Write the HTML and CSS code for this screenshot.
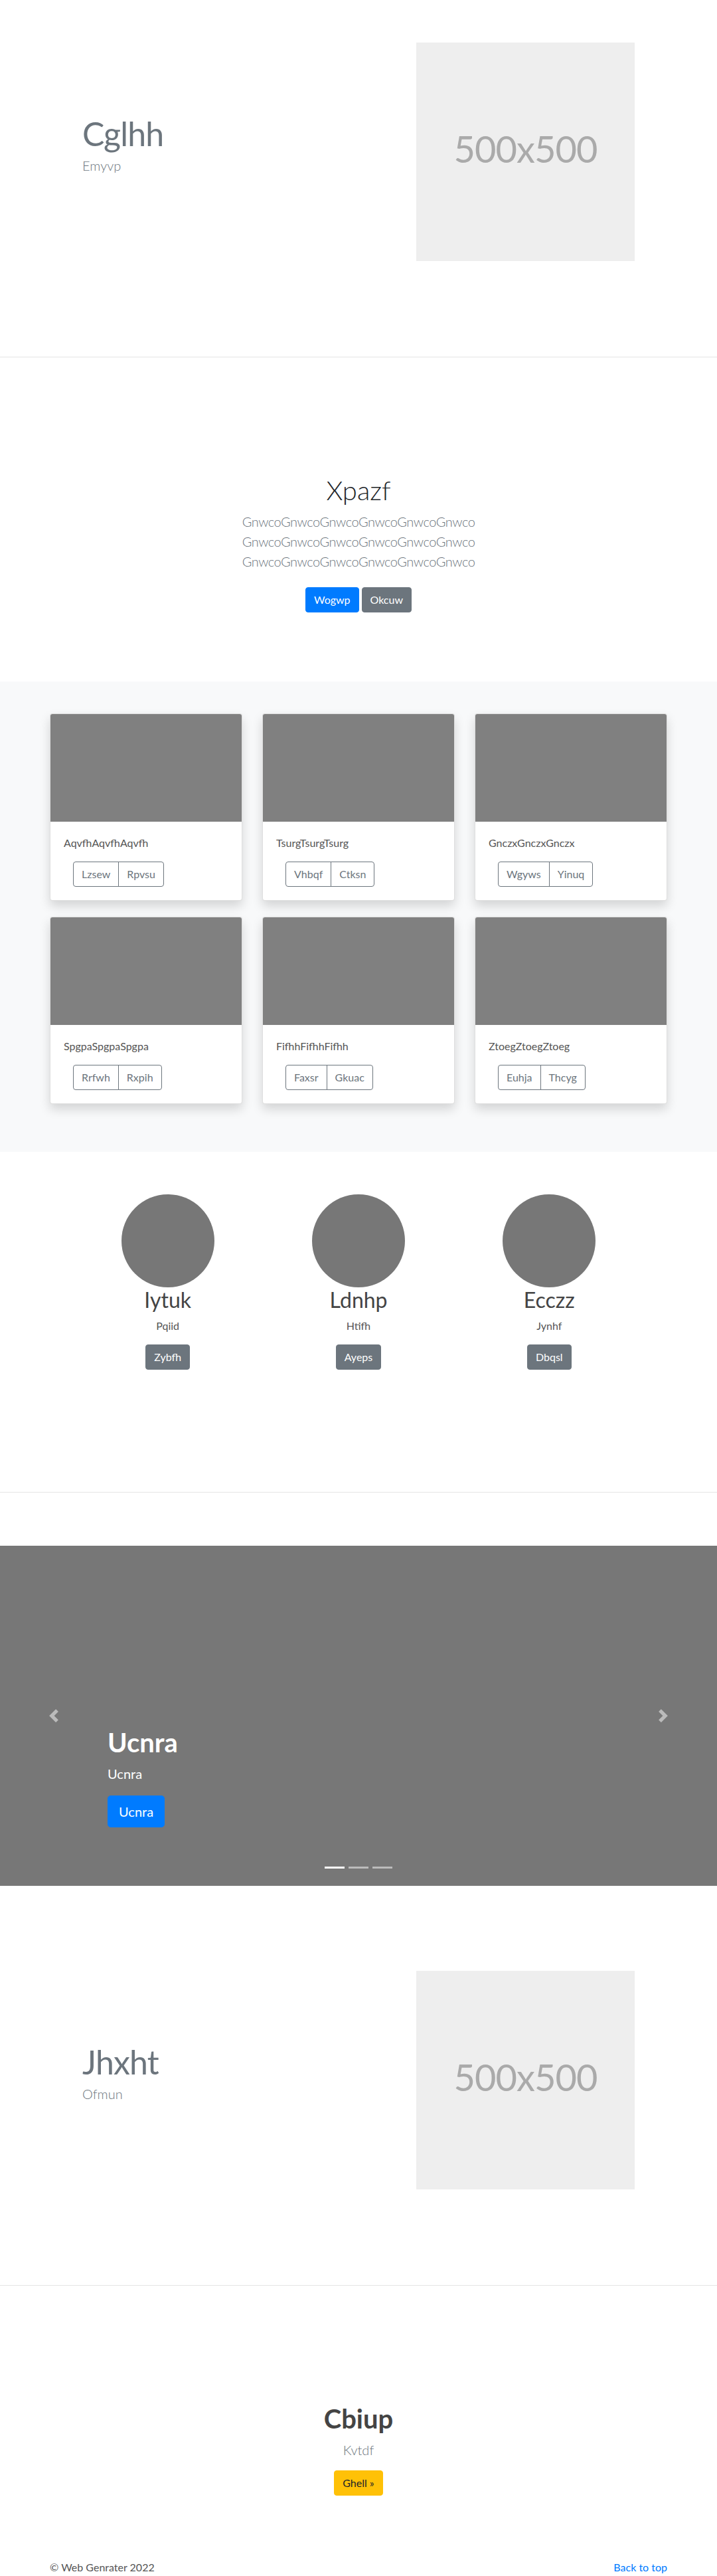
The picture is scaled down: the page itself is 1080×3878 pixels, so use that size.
FILE: index.html
```html
<!DOCTYPE html>
<html lang="en">
<head>
<meta charset="utf-8">
<title>Web Genrater</title>
<link rel="stylesheet" href="styles.css">
</head>
<body>
<main>
  <div class="narrow featurette">
    <div class="feat-text">
      <h2 class="featurette-heading">Cglhh</h2>
      <p class="lead muted feat-lead">Emyvp</p>
    </div>
    <div class="feat-img">
      <svg class="ph-svg" xmlns="http://www.w3.org/2000/svg" width="329" height="329" role="img" aria-label="500x500"><rect width="100%" height="100%" fill="#eee"/><text x="50%" y="50%" fill="#aaa" dy=".3em" text-anchor="middle">500x500</text></svg>
    </div>
  </div>

  <hr class="divider">

  <section class="jumbo">
    <h1 class="jumbo-heading">Xpazf</h1>
    <p class="lead muted jumbo-lead">GnwcoGnwcoGnwcoGnwcoGnwcoGnwco GnwcoGnwcoGnwcoGnwcoGnwcoGnwco GnwcoGnwcoGnwcoGnwcoGnwcoGnwco</p>
    <p class="jumbo-actions"><a href="#" class="btn btn-primary">Wogwp</a><a href="#" class="btn btn-secondary">Okcuw</a></p>
  </section>

  <section class="album">
    <div class="card-grid">
      <div class="card">
        <div class="card-img"></div>
        <div class="card-body">
          <p class="card-text">AqvfhAqvfhAqvfh</p>
          <div class="btn-group"><a href="#" class="btn btn-outline">Lzsew</a><a href="#" class="btn btn-outline">Rpvsu</a></div>
        </div>
      </div>
      <div class="card">
        <div class="card-img"></div>
        <div class="card-body">
          <p class="card-text">TsurgTsurgTsurg</p>
          <div class="btn-group"><a href="#" class="btn btn-outline">Vhbqf</a><a href="#" class="btn btn-outline">Ctksn</a></div>
        </div>
      </div>
      <div class="card">
        <div class="card-img"></div>
        <div class="card-body">
          <p class="card-text">GnczxGnczxGnczx</p>
          <div class="btn-group"><a href="#" class="btn btn-outline">Wgyws</a><a href="#" class="btn btn-outline">Yinuq</a></div>
        </div>
      </div>
      <div class="card">
        <div class="card-img"></div>
        <div class="card-body">
          <p class="card-text">SpgpaSpgpaSpgpa</p>
          <div class="btn-group"><a href="#" class="btn btn-outline">Rrfwh</a><a href="#" class="btn btn-outline">Rxpih</a></div>
        </div>
      </div>
      <div class="card">
        <div class="card-img"></div>
        <div class="card-body">
          <p class="card-text">FifhhFifhhFifhh</p>
          <div class="btn-group"><a href="#" class="btn btn-outline">Faxsr</a><a href="#" class="btn btn-outline">Gkuac</a></div>
        </div>
      </div>
      <div class="card">
        <div class="card-img"></div>
        <div class="card-body">
          <p class="card-text">ZtoegZtoegZtoeg</p>
          <div class="btn-group"><a href="#" class="btn btn-outline">Euhja</a><a href="#" class="btn btn-outline">Thcyg</a></div>
        </div>
      </div>
    </div>
  </section>

  <section class="narrow team">
    <div class="member">
      <div class="avatar"></div>
      <h2 class="member-name">Iytuk</h2>
      <p class="member-role">Pqiid</p>
      <p class="member-action"><a href="#" class="btn btn-secondary">Zybfh</a></p>
    </div>
    <div class="member">
      <div class="avatar"></div>
      <h2 class="member-name">Ldnhp</h2>
      <p class="member-role">Htifh</p>
      <p class="member-action"><a href="#" class="btn btn-secondary">Ayeps</a></p>
    </div>
    <div class="member">
      <div class="avatar"></div>
      <h2 class="member-name">Ecczz</h2>
      <p class="member-role">Jynhf</p>
      <p class="member-action"><a href="#" class="btn btn-secondary">Dbqsl</a></p>
    </div>
  </section>

  <hr class="divider">

  <div class="carousel">
    <div class="carousel-caption">
      <h1 class="caption-title">Ucnra</h1>
      <p class="caption-text">Ucnra</p>
      <p><a href="#" class="btn btn-lg btn-primary">Ucnra</a></p>
    </div>
    <a href="#" class="carousel-control prev" aria-label="Previous">
      <svg width="20" height="20" viewBox="0 0 8 8" fill="#fff"><path d="M5.25 0l-4 4 4 4 1.5-1.5L4.25 4l2.5-2.5L5.25 0z"/></svg>
    </a>
    <a href="#" class="carousel-control next" aria-label="Next">
      <svg width="20" height="20" viewBox="0 0 8 8" fill="#fff"><path d="M2.75 0l-1.5 1.5L3.75 4l-2.5 2.5L2.75 8l4-4-4-4z"/></svg>
    </a>
    <ol class="indicators">
      <li class="active"></li>
      <li></li>
      <li></li>
    </ol>
  </div>

  <div class="narrow featurette">
    <div class="feat-text">
      <h2 class="featurette-heading">Jhxht</h2>
      <p class="lead muted feat-lead">Ofmun</p>
    </div>
    <div class="feat-img">
      <svg class="ph-svg" xmlns="http://www.w3.org/2000/svg" width="329" height="329" role="img" aria-label="500x500"><rect width="100%" height="100%" fill="#eee"/><text x="50%" y="50%" fill="#aaa" dy=".3em" text-anchor="middle">500x500</text></svg>
    </div>
  </div>

  <hr class="divider">

  <section class="cta">
    <h1 class="cta-title">Cbiup</h1>
    <p class="lead muted cta-lead">Kvtdf</p>
    <p><a href="#" class="btn btn-warning">Ghell &raquo;</a></p>
  </section>
</main>

<footer class="footer">
  <p>&copy; Web Genrater 2022</p>
  <p><a href="#" class="top-link">Back to top</a></p>
</footer>
</body>
</html>
```

FILE: styles.css
```css
* { box-sizing: border-box; }

html, body {
  margin: 0;
  padding: 0;
}

body {
  font-family: Lato, "Open Sans", "Liberation Sans", sans-serif;
  font-size: 16px;
  line-height: 1.5;
  color: #212529;
  background: #fff;
}

h1, h2, p, ol { margin: 0; padding: 0; }

a { color: #007bff; text-decoration: none; }

.narrow {
  width: 862px;
  margin: 0 auto;
}

.muted { color: #6c757d; }

.lead {
  font-size: 20px;
  font-weight: 300;
  line-height: 30px;
}

/* Featurette */
.featurette {
  display: flex;
  padding: 64px 0;
}

.feat-text {
  flex: 0 0 58.3333%;
  padding: 0 15px;
}

.feat-img {
  flex: 0 0 41.6667%;
  padding: 0 15px;
}

.featurette-heading {
  margin-top: 112px;
  margin-bottom: 8px;
  font-size: 50px;
  font-weight: 400;
  line-height: 1;
  letter-spacing: -0.8px;
  color: #6c757d;
}

.feat-lead { margin-bottom: 16px; }

.ph-svg {
  display: block;
  width: 329px;
  height: 329px;
  font-family: Lato, "Open Sans", sans-serif;
  font-size: 56px;
  letter-spacing: -1px;
}

.divider {
  margin: 80px 0;
  height: 0;
  border: 0;
  border-top: 1px solid rgba(0, 0, 0, 0.1);
}

/* Buttons */
.btn {
  display: inline-block;
  font-size: 16px;
  font-weight: 400;
  line-height: 24px;
  padding: 6px 12px;
  border: 1px solid transparent;
  border-radius: 4px;
  text-align: center;
  white-space: nowrap;
}

.btn-primary { background: #007bff; border-color: #007bff; color: #fff; }
.btn-secondary { background: #6c757d; border-color: #6c757d; color: #fff; }
.btn-warning { background: #ffc107; border-color: #ffc107; color: #212529; }

.btn-lg {
  font-size: 20px;
  line-height: 30px;
  padding: 8px 16px;
  border-radius: 4.8px;
}

.btn-outline {
  background: transparent;
  border-color: #6c757d;
  color: #6c757d;
}

/* Jumbotron */
.jumbo {
  padding: 96px 0;
  text-align: center;
}

.jumbo-heading {
  font-size: 40px;
  font-weight: 300;
  line-height: 1.2;
  margin-bottom: 8px;
}

.jumbo-lead {
  max-width: 450px;
  margin: 0 auto 16px;
  letter-spacing: -0.5px;
}

.jumbo-actions {
  display: flex;
  justify-content: center;
  gap: 4px;
  padding: 8px 0;
}

/* Album */
.album {
  background: #f8f9fa;
  padding: 48px 0;
}

.card-grid {
  width: 930px;
  margin: 0 auto;
  padding-bottom: 24px;
  display: grid;
  grid-template-columns: repeat(3, 1fr);
  gap: 24px 30px;
}

.card {
  background: #fff;
  border: 1px solid rgba(0, 0, 0, 0.125);
  border-radius: 4px;
  box-shadow: 0 8px 16px rgba(0, 0, 0, 0.15);
  overflow: hidden;
}

.card-img {
  height: 162px;
  background: #808080;
}

.card-body { padding: 20px; }

.card-text {
  margin-bottom: 16px;
  color: #555;
}

.btn-group {
  display: inline-flex;
  margin-left: 14px;
}

.btn-group .btn:first-child { border-radius: 4px 0 0 4px; }
.btn-group .btn:last-child { border-radius: 0 4px 4px 0; margin-left: -1px; }

/* Team */
.team {
  display: grid;
  grid-template-columns: repeat(3, 1fr);
  padding: 64px 0;
  text-align: center;
}

.member { margin-bottom: 24px; }

.avatar {
  width: 140px;
  height: 140px;
  margin: 0 auto;
  border-radius: 50%;
  background: #777;
}

.member-name {
  font-size: 32px;
  font-weight: 400;
  line-height: 1.2;
  margin-bottom: 8px;
  color: #444;
}

.member-role {
  margin-bottom: 16px;
  color: #555;
}

.member-action { margin-bottom: 16px; }

/* Carousel */
.carousel {
  position: relative;
  height: 512px;
  margin-bottom: 64px;
  background: #777;
  overflow: hidden;
}

.carousel-caption {
  position: absolute;
  top: 272px;
  left: 15%;
  right: 15%;
  color: #fff;
  text-align: left;
}

.caption-title {
  font-size: 40px;
  font-weight: 700;
  line-height: 1.2;
  margin-bottom: 8px;
}

.caption-text {
  font-size: 20px;
  line-height: 30px;
  margin-bottom: 18px;
}

.carousel-control {
  position: absolute;
  top: 0;
  bottom: 0;
  width: 15%;
  display: flex;
  align-items: center;
  justify-content: center;
  opacity: 0.5;
}

.carousel-control.prev { left: 0; }
.carousel-control.next { right: 0; }
.carousel-control svg { display: block; }

.indicators {
  position: absolute;
  left: 0;
  right: 0;
  bottom: 26px;
  display: flex;
  justify-content: center;
  list-style: none;
}

.indicators li {
  width: 30px;
  height: 3px;
  margin: 0 3px;
  background: #fff;
  opacity: 0.5;
}

.indicators li.active { opacity: 1; }

/* CTA */
.cta {
  padding: 96px 0;
  text-align: center;
}

.cta-title {
  font-size: 40px;
  font-weight: 700;
  line-height: 1.2;
  margin-bottom: 8px;
  color: #444;
}

.cta-lead { margin-bottom: 16px; }

/* Footer */
.footer {
  width: 930px;
  margin: 0 auto;
  display: flex;
  justify-content: space-between;
  color: #555;
}
```
